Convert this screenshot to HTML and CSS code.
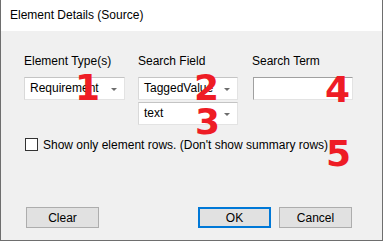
FILE: index.html
```html
<!DOCTYPE html>
<html lang="en">
<head>
  <meta charset="UTF-8" />
  <title>Element Details (Source)</title>
  <link rel="stylesheet" href="styles.css">
</head>
<body>
  <div class="dialog">
    <div class="titlebar">Element Details (Source)</div>

    <div class="content">
      <!-- search fields -->
      <div class="fields">
        <div class="field col-type">
          <label>Element Type(s)</label>
          <div class="combo"><span>Requirement</span><i class="arrow"></i></div>
        </div>
        <div class="field col-field">
          <label>Search Field</label>
          <div class="combo"><span>TaggedValue</span><i class="arrow"></i></div>
          <div class="combo"><span>text</span><i class="arrow"></i></div>
        </div>
        <div class="field col-term">
          <label>Search Term</label>
          <div class="textbox"></div>
        </div>
      </div>

      <div class="check-row">
        <span class="checkbox"></span>
        <span>Show only element rows. (Don't show summary rows)</span>
      </div>

      <div class="buttons">
        <button class="btn">Clear</button>
        <span class="spacer"></span>
        <button class="btn default">OK</button>
        <button class="btn">Cancel</button>
      </div>
    </div>

    <!-- red callout numbers -->
    <span class="mark m1">1</span>
    <span class="mark m2">2</span>
    <span class="mark m3">3</span>
    <span class="mark m4">4</span>
    <span class="mark m5">5</span>
  </div>
</body>
</html>
```

FILE: styles.css
```css
* {
  margin: 0;
  padding: 0;
  box-sizing: border-box;
}

body {
  font-family: "Liberation Sans", Arial, sans-serif;
  font-size: 12px;
  color: #000;
  background: #fff;
}

/* window frame */
.dialog {
  position: relative;
  width: 383px;
  height: 241px;
  border: 1px solid #6e6e6e;
  border-top: none;
  background: #f0f0f0;
  display: flex;
  flex-direction: column;
}

.titlebar {
  height: 31px;
  line-height: 31px;
  padding-left: 9px;
  background: #fff;
}

.content {
  flex: 1;
  padding: 23px 0 0 23px;
  display: flex;
  flex-direction: column;
}

/* three columns of inputs */
.fields {
  display: flex;
  align-items: flex-start;
}

.field {
  display: flex;
  flex-direction: column;
  gap: 2px;
}

.field label {
  line-height: 15px;
  margin-bottom: 6px;
}

.col-type {
  width: 101px;
}
.col-field {
  width: 100px;
  margin-left: 13px;
}
.col-term {
  width: 100px;
  margin-left: 15px;
}
.col-term label {
  margin-left: -1px;
}

.combo {
  position: relative;
  height: 23px;
  line-height: 21px;
  padding-left: 5px;
  background: #fff;
  border: 1px solid;
  border-color: #c4c4c4 #e3e3e3 #e3e3e3 #d9d9d9;
}

.combo .arrow {
  position: absolute;
  right: 7px;
  top: 10px;
  width: 0;
  height: 0;
  border-left: 3px solid transparent;
  border-right: 3px solid transparent;
  border-top: 3px solid #6d6d6d;
}

.textbox {
  height: 23px;
  background: #fff;
  border: 1px solid;
  border-color: #a0a0a0 #e3e3e3 #e3e3e3 #a0a0a0;
}

/* checkbox line */
.check-row {
  display: flex;
  align-items: center;
  gap: 5px;
  margin-top: 13px;
  margin-left: 1px;
  height: 13px;
}

.checkbox {
  width: 13px;
  height: 13px;
  border: 1px solid #333;
  background: #fff;
}

/* bottom buttons */
.buttons {
  display: flex;
  margin-top: 56px;
  margin-left: 2px;
  padding-right: 30px;
}

.spacer {
  flex: 1;
}

.btn {
  width: 73px;
  height: 21px;
  font: inherit;
  color: #000;
  background: #e1e1e1;
  border: 1px solid #adadad;
}

.btn + .btn {
  margin-left: 8px;
}

.btn.default {
  border: 2px solid #0078d7;
}

/* red annotation digits */
.mark {
  position: absolute;
  font-family: "DejaVu Sans", sans-serif;
  font-weight: bold;
  font-size: 36px;
  line-height: 1;
  color: #ee1c25;
}
.m1 { left: 74px; top: 70px; }
.m2 { left: 193px; top: 70px; }
.m3 { left: 194px; top: 104px; }
.m4 { left: 324px; top: 72px; }
.m5 { left: 325px; top: 136px; }
```
